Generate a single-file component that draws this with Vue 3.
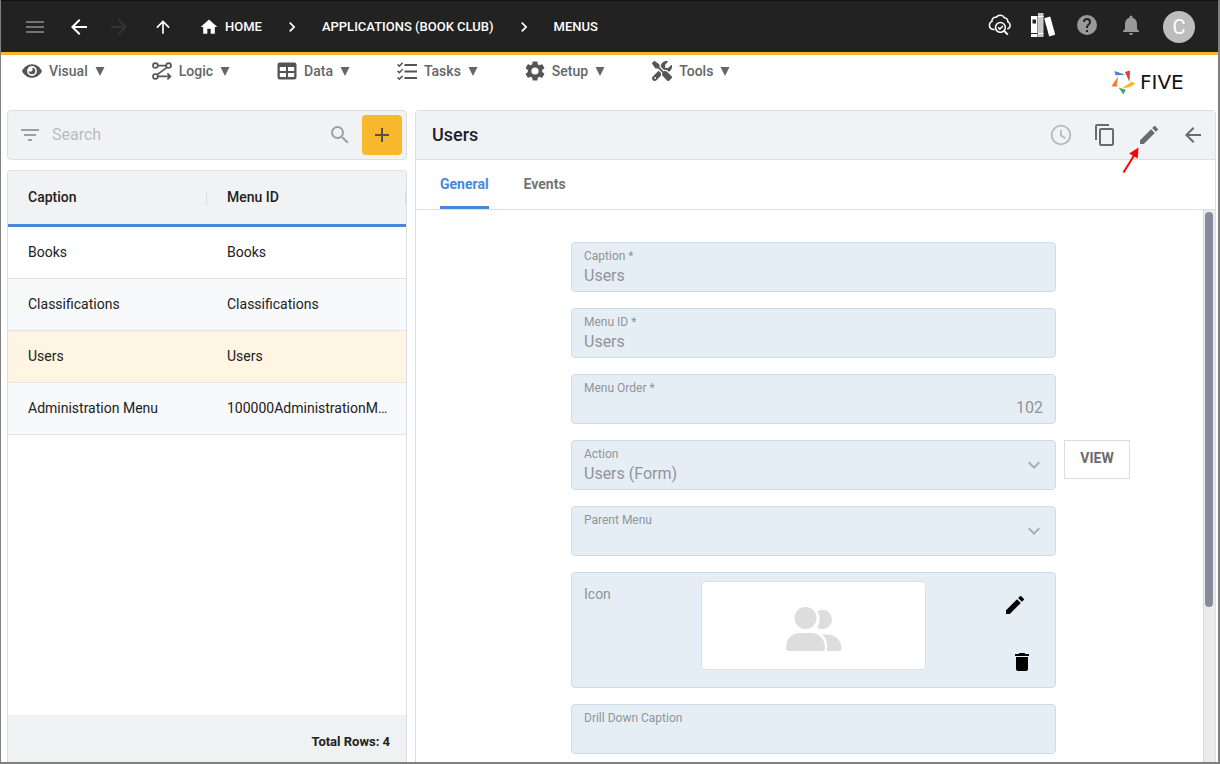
<script setup>
import { ref } from 'vue'

const menus = [
  { name: 'Visual', icon: 'eye' },
  { name: 'Logic', icon: 'logic' },
  { name: 'Data', icon: 'data' },
  { name: 'Tasks', icon: 'tasks' },
  { name: 'Setup', icon: 'gear' },
  { name: 'Tools', icon: 'tools' }
]
const rows = [
  { caption: 'Books', id: 'Books' },
  { caption: 'Classifications', id: 'Classifications' },
  { caption: 'Users', id: 'Users' },
  { caption: 'Administration Menu', id: '100000AdministrationMenu' }
]
const selected = ref(2)
const search = ref('')
const tab = ref('General')
const pencil = 'M3 17.25V21h3.75L17.81 9.94l-3.75-3.75L3 17.25zM20.71 7.04a1 1 0 0 0 0-1.41l-2.34-2.34a1 1 0 0 0-1.41 0l-1.83 1.83 3.75 3.75 1.83-1.83z'
const arrowLeft = 'M20 11H7.83l5.59-5.59L12 4l-8 8 8 8 1.41-1.41L7.83 13H20z'
const chevron = 'M10 6 8.59 7.41 13.17 12l-4.58 4.59L10 18l6-6z'
</script>

<template>
  <div class="app">
    <header class="topbar">
      <button class="ico dim" aria-label="Menu"><svg viewBox="0 0 24 24"><path d="M3 18h18v-2H3zm0-5h18v-2H3zm0-7v2h18V6z" /></svg></button>
      <div class="history">
        <button class="ico" aria-label="Back"><svg viewBox="0 0 24 24"><path :d="arrowLeft" /></svg></button>
        <button class="ico off" aria-label="Forward" disabled><svg viewBox="0 0 24 24"><path d="m12 4-1.41 1.41L16.17 11H4v2h12.17l-5.58 5.59L12 20l8-8z" /></svg></button>
      </div>
      <button class="ico" aria-label="Up"><svg class="s20" viewBox="0 0 24 24"><path d="m4 12 1.41 1.41L11 7.83V20h2V7.83l5.58 5.59L20 12l-8-8z" /></svg></button>
      <nav class="crumbs">
        <a href="#" class="home"><svg class="s20" viewBox="0 0 24 24"><path d="M10 20v-6h4v6h5v-8h3L12 3 2 12h3v8z" /></svg>HOME</a>
        <span class="ico"><svg class="s20" viewBox="0 0 24 24"><path :d="chevron" /></svg></span>
        <a href="#">APPLICATIONS (BOOK CLUB)</a>
        <span class="ico"><svg class="s20" viewBox="0 0 24 24"><path :d="chevron" /></svg></span>
        <a href="#">MENUS</a>
      </nav>
      <div class="actions">
        <button class="ico" aria-label="Inspect deployment">
          <svg viewBox="0 0 24 24" class="line" stroke-width="1.5">
            <path d="M7.600 16.600H6.200A4.300 4.300 0 0 1 5 8.400 3.600 3.600 0 0 1 9.200 4.200 5 5 0 0 1 17.400 4.700 3.900 3.900 0 0 1 20.800 8.700 3.900 3.900 0 0 1 20.400 16" />
            <circle cx="13.400" cy="14.400" r="4.900" /><path d="m17.100 17.900 3.700 3.700" stroke-width="2" /><path d="m11.100 14.400 1.700 1.700 3-3.200" />
          </svg>
        </button>
        <button class="ico" aria-label="Library">
          <svg viewBox="0 0 24 24">
            <path d="M0 3h6.500v21H0zM13.200 5.200l6-1.600 5 18.200-6 1.800z" /><path fill="#c9c9c9" d="M7 0h5.500v24H7z" /><path fill="#222" d="M1.500 6.500h3.500v4H1.500zM0 20h6.500v1H0z" />
            <path d="M7 20.500h5.500M7 3.500h5.500M13.900 8.200l6-1.600M14.800 11.200l6-1.600M17.300 20l6-1.800" class="line" stroke="#333" stroke-width="1" />
          </svg>
        </button>
        <button class="ico gray" aria-label="Help"><svg viewBox="0 0 24 24"><path d="M12 2a10 10 0 1 0 0 20 10 10 0 0 0 0-20zm1 17h-2v-2h2zm2.07-7.75-.9.92C13.45 12.9 13 13.5 13 15h-2v-.5c0-1.1.45-2.1 1.17-2.83l1.24-1.26A2 2 0 1 0 10 9H8a4 4 0 1 1 8 0c0 .88-.36 1.68-.93 2.25z" /></svg></button>
        <button class="ico gray" aria-label="Notifications"><svg viewBox="0 0 24 24"><path d="M12 22a2 2 0 0 0 2-2h-4a2 2 0 0 0 2 2zm6-6v-5c0-3.07-1.64-5.64-4.5-6.32V4a1.5 1.5 0 0 0-3 0v.68C7.63 5.36 6 7.92 6 11v5l-2 2v1h16v-1z" /></svg></button>
      </div>
      <button class="avatar" aria-label="Account">C</button>
    </header>

    <nav class="menubar">
      <button v-for="m in menus" :key="m.name" class="menu">
        <svg v-if="m.icon === 'eye'" viewBox="0 0 20 20"><path fill-rule="evenodd" d="M10 3.200c4.700 0 8.200 3 10 6.800-1.800 3.800-5.300 6.800-10 6.800S1.800 13.800 0 10c1.800-3.800 5.300-6.800 10-6.800zm0 1.900a4.900 4.900 0 1 0 0 9.800 4.900 4.900 0 0 0 0-9.800z" /><path d="M10 6.700a3.300 3.300 0 1 1-3.300 3.300A1.800 1.800 0 0 0 10 6.700z" /></svg>
        <svg v-else-if="m.icon === 'logic'" viewBox="0 0 20 20" class="line" stroke-width="1.700"><circle cx="3.400" cy="4.600" r="2.400" /><circle cx="16.600" cy="4.600" r="2.400" /><circle cx="3.400" cy="15.400" r="2.400" /><path d="M5.800 4.600h8.400M15 6.400 5.200 13.600M5.800 15.400H18M15.400 12.400l3 3-3 3" /></svg>
        <svg v-else-if="m.icon === 'data'" viewBox="0 0 20 20"><path fill-rule="evenodd" d="M2.800 1.500h14.400A2.300 2.300 0 0 1 19.500 3.800v12.400a2.300 2.300 0 0 1-2.300 2.300H2.800A2.300 2.300 0 0 1 .5 16.200V3.800A2.300 2.300 0 0 1 2.800 1.500zM2.800 6v4H9V6zM11 6v4h6.200V6zM2.800 12v4H9v-4zM11 12v4h6.200v-4z" /></svg>
        <svg v-else-if="m.icon === 'tasks'" viewBox="0 0 20 20" class="line" stroke-width="2"><path d="M7.500 4H20M7.500 10.500H20M7.500 17H20" /><path d="m.6 3.400 1.800 1.800L5.600 1.800M.6 9.900l1.800 1.800 3.200-3.400M.6 16.400l1.800 1.800 3.200-3.400" stroke-width="1.600" /></svg>
        <svg v-else-if="m.icon === 'gear'" viewBox="2 2 20 20"><path d="M19.140 12.940a7 7 0 0 0 0-1.880l2.030-1.580a.5.5 0 0 0 .12-.61l-1.920-3.320a.5.5 0 0 0-.59-.22l-2.390.96a7 7 0 0 0-1.620-.94l-.36-2.540A.5.5 0 0 0 13.930 2.400h-3.840a.5.5 0 0 0-.47.410l-.36 2.540a7.300 7.300 0 0 0-1.620.94l-2.390-.96a.5.5 0 0 0-.59.220L2.740 8.870a.5.5 0 0 0 .12.610l2.030 1.580a7 7 0 0 0 0 1.880l-2.030 1.580a.5.5 0 0 0-.12.610l1.920 3.320c.12.220.370.290.590.220l2.390-.96c.5.380 1.030.7 1.620.94l.36 2.540c.05.240.240.410.480.410h3.840a.5.5 0 0 0 .47-.41l.36-2.540a7 7 0 0 0 1.620-.94l2.390.96c.22.080.470 0 .59-.22l1.920-3.320a.5.5 0 0 0-.12-.61zM12 15.600a3.600 3.600 0 1 1 0-7.200 3.600 3.600 0 0 1 0 7.200z" /></svg>
        <svg v-else viewBox="0 0 512 512"><path d="M78.600 5C69.100-2.400 55.600-1.500 47 7L7 47c-8.500 8.500-9.400 22-2.100 31.600l80 104c4.500 5.900 11.600 9.400 19 9.400h54.100l109 109c-14.700 29-10 65.400 14.300 89.600l112 112c12.500 12.500 32.800 12.500 45.300 0l64-64c12.500-12.500 12.500-32.800 0-45.300l-112-112c-24.200-24.200-60.600-29-89.600-14.300L192 158v-54c0-7.500-3.500-14.500-9.400-19zM19.900 396.100C7.200 408.800 0 426.100 0 444.100 0 481.600 30.400 512 67.900 512c18 0 35.300-7.200 48-19.900l117.800-117.800c-7.800-20.900-9-43.600-3.600-65.100l-61.700-61.700zM512 144c0-10.500-1.100-20.700-3.200-30.500-2.400-11.200-16.100-14.100-24.200-6l-63.900 63.900c-3 3-7.100 4.700-11.300 4.700H352c-8.800 0-16-7.200-16-16v-57.400c0-4.200 1.700-8.300 4.700-11.300l63.900-63.900c8.100-8.100 5.200-21.800-6-24.200C388.700 1.100 378.500 0 368 0c-79.500 0-144 64.500-144 144v.8l85.300 85.300c36-9.100 75.800.5 104 28.700l15.700 15.700c49-23 83-72.800 83-130.500zM56 432a24 24 0 1 1 48 0 24 24 0 1 1-48 0z" /></svg>
        <span>{{ m.name }}</span>
        <svg class="caret" viewBox="0 0 10 10"><path d="M0 0h10L5 10z" /></svg>
      </button>
      <a href="#" class="brand" aria-label="Five home">
        <svg viewBox="0 0 24 24" aria-hidden="true">
          <path fill="#4285d6" d="M3.500 1 14.500 4.800 4.500 5.200z" /><path fill="#e5393c" d="M19 .4 18.500 12 14 2z" /><path fill="#f9b82b" d="m24.300 14-6.600 3.600-6.700.4 10-6.500z" /><path fill="#43a85a" d="m7.500 17.500 7.200 2.300-2.200 4.600z" /><path fill="#f47f30" d="M7 6.500 5.800 16.800.3 16.200z" />
        </svg>
        <span>FIVE</span>
      </a>
    </nav>

    <main class="work">
      <section class="side">
        <div class="search">
          <button class="ico" aria-label="Filter"><svg viewBox="0 0 24 24"><path d="M10 18h4v-2h-4zM3 6v2h18V6zm3 7h12v-2H6z" /></svg></button>
          <input v-model="search" type="text" placeholder="Search" aria-label="Search" />
          <button class="ico" aria-label="Run search"><svg viewBox="0 0 24 24"><path d="M15.500 14h-.79l-.28-.27A6.471 6.471 0 0 0 16 9.500 6.500 6.500 0 1 0 9.500 16c1.610 0 3.090-.59 4.230-1.570l.27.280v.79l5 4.990L20.490 19zm-6 0a4.500 4.500 0 1 1 0-9 4.500 4.500 0 0 1 0 9z" /></svg></button>
          <button class="add" aria-label="Add"><svg viewBox="0 0 24 24"><path d="M19 13h-6v6h-2v-6H5v-2h6V5h2v6h6z" /></svg></button>
        </div>
        <div class="list">
          <table>
            <thead><tr><th scope="col">Caption</th><th scope="col">Menu ID</th></tr></thead>
            <tbody>
              <tr v-for="(r, i) in rows" :key="r.id" :class="{ selected: i === selected }" @click="selected = i">
                <td>{{ r.caption }}</td><td>{{ r.id }}</td>
              </tr>
            </tbody>
          </table>
          <footer>Total Rows: {{ rows.length }}</footer>
        </div>
      </section>

      <section class="detail">
        <header class="head">
          <h1>Users</h1>
          <button class="ico light" aria-label="History"><svg viewBox="0 0 24 24" class="line" stroke-width="1.800"><circle cx="12" cy="12" r="9.300" /><path d="M12 7v5.500l4.500 2.700" /></svg></button>
          <button class="ico" aria-label="Copy"><svg viewBox="0 0 24 24"><path d="M16 1H4a2 2 0 0 0-2 2v14h2V3h12zm3 4H8a2 2 0 0 0-2 2v14c0 1.100.9 2 2 2h11a2 2 0 0 0 2-2V7a2 2 0 0 0-2-2zm0 16H8V7h11z" /></svg></button>
          <button class="ico edit" aria-label="Edit">
            <svg viewBox="0 0 24 24"><path :d="pencil" /></svg>
            <svg class="pointer" viewBox="0 0 18 28"><path d="M1.500 25.500 12 8.500" fill="none" stroke="red" stroke-width="2" /><path fill="red" d="M16.500.5 15.700 11.500 7.200 6.400z" /></svg>
          </button>
          <button class="ico" aria-label="Close"><svg viewBox="0 0 24 24"><path :d="arrowLeft" /></svg></button>
        </header>
        <div class="tabs" role="tablist">
          <button v-for="t in ['General', 'Events']" :key="t" role="tab" :aria-selected="tab === t" :class="{ active: tab === t }" @click="tab = t">{{ t }}</button>
        </div>
        <div class="body">
          <form class="form" @submit.prevent>
            <div class="field"><label for="caption">Caption *</label><input id="caption" value="Users" disabled /></div>
            <div class="field"><label for="menuid">Menu ID *</label><input id="menuid" value="Users" disabled /></div>
            <div class="field"><label for="order">Menu Order *</label><input id="order" class="num" value="102" disabled /></div>
            <div class="field">
              <label for="action">Action</label>
              <select id="action" disabled><option>Users (Form)</option></select>
              <svg class="down" viewBox="0 0 24 24"><path d="M7.410 8.590 12 13.170l4.590-4.580L18 10l-6 6-6-6z" /></svg>
            </div>
            <button class="view" type="button">VIEW</button>
            <div class="field">
              <label for="parent">Parent Menu</label>
              <select id="parent" disabled><option></option></select>
              <svg class="down" viewBox="0 0 24 24"><path d="M7.410 8.590 12 13.170l4.590-4.580L18 10l-6 6-6-6z" /></svg>
            </div>
            <div class="field picture">
              <span class="name">Icon</span>
              <div class="preview">
                <svg viewBox="0 0 56 44"><circle cx="19.500" cy="11" r="11" /><path d="M0 41C0 32 6 26 14 26h11c8 0 14 6 14 15 0 2-1 3-3 3H3c-2 0-3-1-3-3zM31.500 4.300A9.600 9.600 0 1 1 31 20.500c3.500-4.500 3.500-11.200.5-16.200zM36 27.500h5.500C50 27.500 55.500 34 55.500 41.500 55.500 43 54.500 44 53 44H40.500c1.800-5 .5-12.500-4.500-16.500z" /></svg>
              </div>
              <div class="tools">
                <button class="ico pick" type="button" aria-label="Edit icon"><svg viewBox="0 0 24 24"><path :d="pencil" /></svg></button>
                <button class="ico" type="button" aria-label="Delete icon"><svg viewBox="0 0 24 24"><path d="M6 19a2 2 0 0 0 2 2h8a2 2 0 0 0 2-2V7H6zM19 4h-3.500l-1-1h-5l-1 1H5v2h14z" /></svg></button>
              </div>
            </div>
            <div class="field"><label for="drill">Drill Down Caption</label><input id="drill" value="" disabled /></div>
          </form>
          <div class="track"><div class="thumb"></div></div>
        </div>
      </section>
    </main>
  </div>
</template>

<style>
body { margin: 0; }
</style>

<style scoped>
* { box-sizing: border-box; }
.app {
  display: flex; flex-direction: column; height: 100vh; overflow: hidden;
  border: solid #808080; border-width: 0 2px 2px 1px;
  font: 14px/20px Roboto, "Liberation Sans", sans-serif; color: #212121; background: #fff;
}
button { border: 0; margin: 0; padding: 0; background: none; font: inherit; color: inherit; cursor: pointer; }
a { color: inherit; text-decoration: none; }
svg { display: block; fill: currentColor; }
.line { fill: none; stroke: currentColor; }
.ico { display: flex; align-items: center; justify-content: center; width: 24px; height: 24px; flex: none; }
.ico svg { width: 24px; height: 24px; }
.ico svg.s20, svg.s20 { width: 20px; height: 20px; }

.topbar {
  display: flex; align-items: center; flex: none; height: 55px; padding: 0 23px 0 22px;
  background: #222; border-top: 1px solid #111; border-bottom: 3px solid #fbb52b; color: #fff;
}
.dim { color: #747474; }
.off { color: #343434; }
.history { display: flex; gap: 16px; margin: 0 20px; }
.crumbs { display: flex; align-items: center; gap: 18px; margin-left: 24px; font-weight: 500; font-size: 13px; line-height: 22px; white-space: nowrap; }
.home { display: flex; align-items: center; gap: 6px; }
.actions { display: flex; gap: 20px; margin: 0 20px 4px auto; }
.gray { color: #999; }
.avatar { width: 32px; height: 32px; border-radius: 50%; background: #bdbdbd; color: #fff; font-size: 20px; }

.menubar { display: flex; align-items: flex-start; gap: 47px; flex: none; height: 55px; padding: 5px 20px 0 21px; color: #666; }
.menu { display: flex; align-items: center; height: 22px; font-size: 14px; font-weight: 500; }
.menu svg { width: 20px; height: 20px; color: #555; }
.menu span { margin: 0 7px; }
.menu .caret { width: 10px; height: 9px; color: #666; }
.brand { display: flex; align-items: center; gap: 5px; margin: 10px 0 0 auto; color: #111; font: 20px/24px "DejaVu Sans", sans-serif; }
.brand svg { width: 24px; height: 24px; overflow: visible; }
.brand span { min-width: 58px; }

.work { display: grid; grid-template-columns: minmax(0, 400px) minmax(0, 1fr); gap: 8px; flex: 1; min-height: 0; padding: 0 2px 0 6px; }
.side { display: flex; flex-direction: column; gap: 10px; min-height: 0; }
.search { display: flex; align-items: center; height: 50px; flex: none; padding: 0 4px 0 10px; border: 1px solid #dedfe0; border-radius: 4px; background: #f0f2f4; color: #98a1a7; }
.search input { flex: 1; min-width: 0; margin: 0 10px; padding: 0; border: 0; outline: 0; background: none; font: 16px/24px Roboto, sans-serif; color: #333; }
.search input::placeholder { color: #b9bdc0; opacity: 1; }
.add { display: grid; place-items: center; width: 40px; height: 40px; margin-left: 10px; border-radius: 4px; background: #f8b82b; color: #505050; }
.add svg { width: 24px; height: 24px; }
.list { display: flex; flex-direction: column; flex: 1; min-height: 0; border: 1px solid #dedfe0; border-bottom: 0; border-radius: 4px 4px 0 0; overflow: hidden; }
table { width: 100%; table-layout: fixed; border-collapse: separate; border-spacing: 0; }
th { position: relative; height: 56px; padding: 0 20px 2px; text-align: left; font-weight: 500; background: #f0f2f4; border-bottom: 3px solid #4788db; }
th::after { content: ""; position: absolute; right: -1px; top: 20px; width: 2px; height: 14px; background: #dcdee0; }
td { height: 52px; padding: 0 15px 2px 20px; border-bottom: 1px solid #e2e4e6; overflow: hidden; white-space: nowrap; text-overflow: ellipsis; }
tbody tr:nth-child(even) td { background: #f8f9fb; }
tbody tr.selected td { background: #fff5e2; }
footer { margin-top: auto; height: 47px; padding: 17px 16px 0; background: #eef2f3; text-align: right; font-weight: 700; font-size: 13px; line-height: 20px; }

.detail { display: flex; flex-direction: column; min-height: 0; border: 1px solid #dedfe0; border-bottom: 0; border-radius: 4px 4px 0 0; }
.head { display: flex; align-items: center; gap: 20px; height: 49px; flex: none; padding: 0 10px 0 16px; background: #f0f2f4; border-bottom: 1px solid #dedfe0; color: #6b6b6b; }
.head h1 { margin: 0 auto 0 0; font-size: 18px; line-height: 24px; font-weight: 500; color: #1b1f2e; }
.light { color: #b6b8ba; }
.edit { position: relative; }
.ico .pointer { position: absolute; left: -15px; top: 24px; width: 18px; height: 28px; }
.tabs { display: flex; gap: 35px; height: 50px; flex: none; padding: 0 24px; border-bottom: 1px solid #dedfe0; }
.tabs button { padding-top: 2px; border-bottom: 3px solid transparent; border-radius: 2px 2px 0 0; font-weight: 700; color: #757575; }
.tabs .active { color: #4788db; border-color: #4788db; }
.body { display: flex; flex: 1; min-height: 0; overflow: hidden; }
.form { flex: 1; display: grid; grid-template-columns: 1fr minmax(0, 485px) 1fr; align-content: start; gap: 16px 8px; padding: 32px 0 0 8px; }
.field { position: relative; grid-column: 2; height: 50px; padding: 5px 12px 0; background: #e6eef5; border: 1px solid #cddcec; border-radius: 4px; color: #8f9499; }
.field label { display: block; font-size: 12px; line-height: 16px; }
.field input, .field select { display: block; width: 100%; height: 24px; padding: 0; border: 0; background: none; appearance: none; opacity: 1; font: 16px/24px Roboto, sans-serif; color: #8f9499; }
.field .num { text-align: right; }
.down { position: absolute; right: 9px; top: 12px; width: 24px; height: 24px; color: #a6adb3; }
.view { grid-column: 3; grid-row: 4; justify-self: start; width: 66px; height: 39px; padding-bottom: 3px; border: 1px solid #dcdcdc; font-weight: 700; color: #6b6b6b; }
.picture { display: grid; grid-template-columns: 1fr 225px 1fr; height: 116px; padding: 8px 0 0; }
.name { padding: 3px 12px; }
.preview { display: grid; place-items: center; height: 89px; padding-top: 6px; background: #fff; border: 1px solid #dedfe0; border-radius: 4px; color: #ddd; }
.preview svg { width: 56px; height: 44px; }
.tools { display: flex; flex-direction: column; align-items: flex-end; gap: 33px; padding: 12px 21px 0 0; color: #000; }
.pick { margin-right: 7px; }
.track { width: 12px; padding: 2px 1px; border-left: 1px solid #d8d8d8; background: #ebebeb; }
.thumb { width: 8px; height: 72%; border-radius: 4px; background: #858b9b; }
</style>
